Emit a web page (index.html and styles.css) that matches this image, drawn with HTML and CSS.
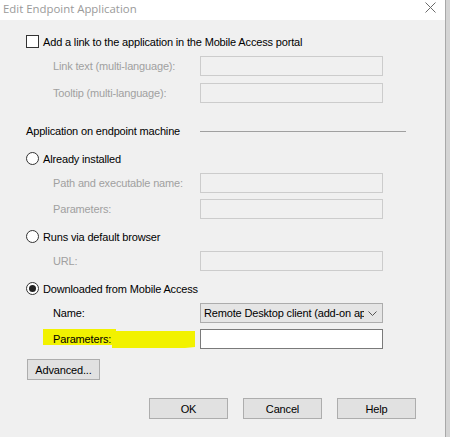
FILE: index.html
```html
<!DOCTYPE html>
<html>
<head>
<meta charset="utf-8">
<link rel="stylesheet" href="styles.css">
</head>
<body>
<div class="window">
  <div class="dialog">
    <div class="titlebar">
      <span class="title">Edit Endpoint Application</span>
      <svg class="close" width="11" height="11" viewBox="0 0 11 11"><path d="M0.5 0.5L10.5 10.5M10.5 0.5L0.5 10.5" stroke="#6a6a6a" stroke-width="1" fill="none"/></svg>
    </div>
    <div class="body">
      <div class="option r-check"><span class="checkbox"></span><span>Add a link to the application in the Mobile Access portal</span></div>
      <div class="field f1"><span class="label dis">Link text (multi-language):</span><span class="input dis"></span></div>
      <div class="field f2"><span class="label dis">Tooltip (multi-language):</span><span class="input dis"></span></div>

      <div class="section"><span>Application on endpoint machine</span><span class="rule"></span></div>

      <div class="option r-1"><span class="radio"></span><span>Already installed</span></div>
      <div class="field f3"><span class="label dis">Path and executable name:</span><span class="input dis"></span></div>
      <div class="field f4"><span class="label dis">Parameters:</span><span class="input dis"></span></div>

      <div class="option r-2"><span class="radio"></span><span>Runs via default browser</span></div>
      <div class="field f5"><span class="label dis">URL:</span><span class="input dis"></span></div>

      <div class="option r-3"><span class="radio on"></span><span>Downloaded from Mobile Access</span></div>
      <div class="field f6"><span class="label">Name:</span><span class="select"><span class="sel-text">Remote Desktop client (add-on ap</span><svg class="chev" width="9" height="5" viewBox="0 0 9 5"><path d="M0.5 0.5L4.5 4.5L8.5 0.5" stroke="#555" fill="none" stroke-width="1"/></svg></span></div>
      <div class="field f7"><span class="label hl">Parameters:</span><span class="input white"></span></div>

      <div class="adv-row"><span class="btn adv">Advanced...</span></div>

      <div class="btn-row"><span class="btn">OK</span><span class="btn">Cancel</span><span class="btn">Help</span></div>
    </div>
  </div>
  <div class="strip"></div>
</div>
</body>
</html>
```
FILE: styles.css
```css
html, body {
  margin: 0;
  padding: 0;
  background: #f0f0f0;
}
.window {
  display: flex;
  width: 450px;
  height: 437px;
  overflow: hidden;
  font-family: "Liberation Sans", Arial, sans-serif;
  font-size: 11px;
  letter-spacing: -0.16px;
  color: #000;
}
.dialog {
  width: 446px;
  display: flex;
  flex-direction: column;
  border-right: 1px solid #a8a8a8;
  box-sizing: border-box;
}
.strip {
  flex: 1;
  background: #d4d4d4;
}
.titlebar {
  height: 20px;
  background: #ffffff;
  display: flex;
  align-items: center;
  justify-content: space-between;
  padding: 0 9px 0 3px;
  flex-shrink: 0;
}
.title {
  font-family: "Open Sans", "Noto Sans", sans-serif;
  font-size: 11.4px;
  letter-spacing: 0;
  color: #9a9a9a;
  margin-top: -4px;
}
.close {
  margin-top: -6px;
}
.body {
  flex: 1;
  display: flex;
  flex-direction: column;
  padding-left: 26px;
}
.option {
  display: flex;
  align-items: center;
  gap: 4px;
  height: 13px;
}
.checkbox {
  width: 11px;
  height: 11px;
  border: 1px solid #333;
  background: #fff;
}
.radio {
  width: 11px;
  height: 11px;
  border: 1px solid #333;
  border-radius: 50%;
  background: #fff;
  display: flex;
  align-items: center;
  justify-content: center;
}
.radio.on::after {
  content: "";
  width: 7px;
  height: 7px;
  border-radius: 50%;
  background: #222;
}
.r-check { margin-top: 15px; }
.field {
  display: grid;
  grid-template-columns: 147px 183px;
  align-items: center;
  height: 20px;
  margin-left: 27px;
}
.f1 { margin-top: 8px; }
.f2 { margin-top: 7px; }
.f3 { margin-top: 8px; }
.f4 { margin-top: 6px; }
.f5 { margin-top: 8px; }
.f6 { margin-top: 8px; }
.f7 { margin-top: 6px; }
.r-1 { margin-top: 14px; }
.r-2 { margin-top: 11px; }
.r-3 { margin-top: 11px; }
.label.dis { color: #a0a0a0; }
.input {
  height: 20px;
  box-sizing: border-box;
  border: 1px solid #cccccc;
  background: #f0f0f0;
}
.input.white {
  background: #ffffff;
  border-color: #7a7a7a;
}
.select {
  height: 20px;
  box-sizing: border-box;
  border: 1px solid #acacac;
  background: #e5e5e5;
  display: flex;
  align-items: center;
  justify-content: space-between;
  padding: 0 5px 0 3px;
  white-space: nowrap;
}
.sel-text {
  overflow: hidden;
  width: 160px;
}
.hl {
  position: relative;
  z-index: 0;
}
.hl::before {
  content: "";
  position: absolute;
  z-index: -1;
  left: -10px;
  top: -4px;
  width: 152px;
  height: 20px;
  background: #f2f200;
  clip-path: polygon(0 0, 73px 0, 73px 2px, 152px 2px, 152px 18px, 142px 19px, 69px 19px, 69px 16px, 0 16px);
}
.section {
  display: grid;
  grid-template-columns: 174px 206px;
  align-items: center;
  height: 14px;
  margin-top: 21px;
}
.rule {
  height: 1px;
  background: #a0a0a0;
}
.btn {
  display: flex;
  align-items: center;
  justify-content: center;
  box-sizing: border-box;
  height: 21px;
  width: 79px;
  border: 1px solid #adadad;
  background: #e1e1e1;
}
.adv-row {
  display: flex;
  margin-top: 10px;
  margin-left: 1px;
}
.btn.adv { width: 73px; }
.btn-row {
  display: flex;
  gap: 15px;
  margin-top: 18px;
  margin-left: 123px;
}
```
